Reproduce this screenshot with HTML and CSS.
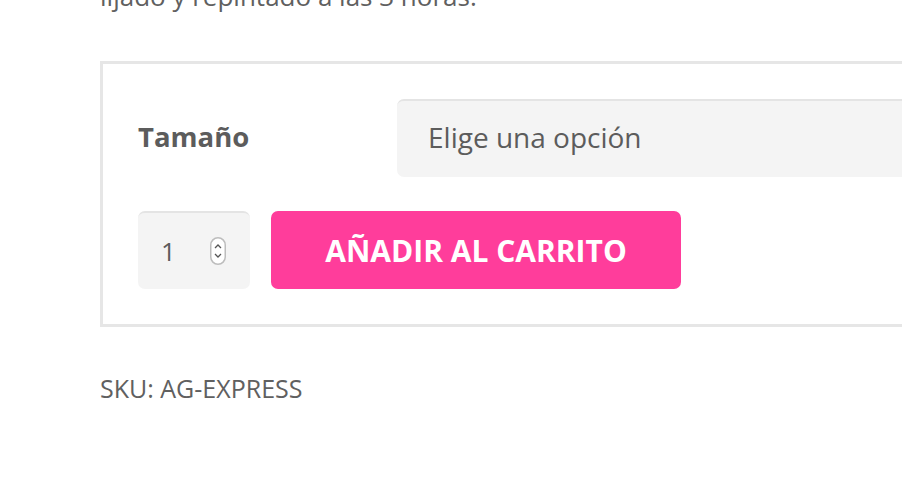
FILE: index.html
```html
<!DOCTYPE html>
<html lang="es">
<head>
    <meta charset="UTF-8">
    <meta name="viewport" content="width=device-width, initial-scale=1.0">
    <title>AG Express</title>
    <link rel="stylesheet" href="styles.css">
</head>
<body>
    <div class="product-summary">
        <!-- Short description (scrolled past) -->
        <p class="description">lijado y repintado a las 3 horas.</p>

        <!-- Variations form -->
        <form class="cart-box">
            <div class="variation-row">
                <label class="variation-label" for="tamano">Tamaño</label>
                <div class="variation-select" id="tamano">Elige una opción</div>
            </div>
            <div class="cart-row">
                <div class="qty">
                    <span class="qty-value">1</span>
                    <svg class="qty-spin" width="16" height="28" viewBox="0 0 16 28">
                        <rect x="0.75" y="0.75" width="14.5" height="26.5" rx="7.25" fill="#fff" stroke="#bdbdbd" stroke-width="1.5"/>
                        <path d="M5 11 L8 8 L11 11" fill="none" stroke="#555" stroke-width="1.3"/>
                        <path d="M5 17 L8 20 L11 17" fill="none" stroke="#555" stroke-width="1.3"/>
                    </svg>
                </div>
                <button type="button" class="add-to-cart">AÑADIR AL CARRITO</button>
            </div>
        </form>

        <!-- Product meta -->
        <div class="product-meta">SKU: AG-EXPRESS</div>
    </div>
</body>
</html>
```

FILE: styles.css
```css
/* Global Styling */
body {
    margin: 0;
    background-color: #ffffff;
    font-family: "Open Sans", "Liberation Sans", sans-serif;
    color: #606060;
    overflow: hidden;
}
.product-summary {
    padding-left: 100px;
    margin-top: -24px;
}
.description {
    font-size: 26px;
    line-height: 40px;
    margin: 0 0 45px 0;
}
/* Variations / Cart Box */
.cart-box {
    width: 900px;
    border: 3px solid #e6e6e6;
    padding: 35px;
    display: flex;
    flex-direction: column;
    gap: 34px;
}
.variation-row {
    display: flex;
    align-items: center;
}
.variation-label {
    width: 259px;
    padding-bottom: 4px;
    font-size: 27.5px;
    font-weight: 700;
    color: #5c5c5c;
}
.variation-select {
    flex-grow: 1;
    height: 78px;
    box-sizing: border-box;
    padding-left: 31px;
    padding-bottom: 4px;
    display: flex;
    align-items: center;
    background-color: #f4f4f4;
    border-top: 2px solid #e4e4e4;
    border-radius: 7px;
    font-size: 28px;
    color: #5c5c5c;
}
/* Quantity + Button */
.cart-row {
    display: flex;
    gap: 21px;
}
.qty {
    width: 112px;
    height: 78px;
    box-sizing: border-box;
    display: flex;
    align-items: center;
    padding-left: 23px;
    gap: 34px;
    background-color: #f4f4f4;
    border-top: 2px solid #e4e4e4;
    border-radius: 7px;
}
.qty-value {
    font-size: 26px;
    color: #5c5c5c;
}
.add-to-cart {
    width: 410px;
    height: 78px;
    border: none;
    border-radius: 7px;
    background-color: #ff3d9b;
    color: #ffffff;
    font-family: "Open Sans", "Liberation Sans", sans-serif;
    font-size: 30px;
    font-weight: 700;
    cursor: pointer;
}
/* Product Meta */
.product-meta {
    margin-top: 44px;
    font-size: 25px;
}
```
